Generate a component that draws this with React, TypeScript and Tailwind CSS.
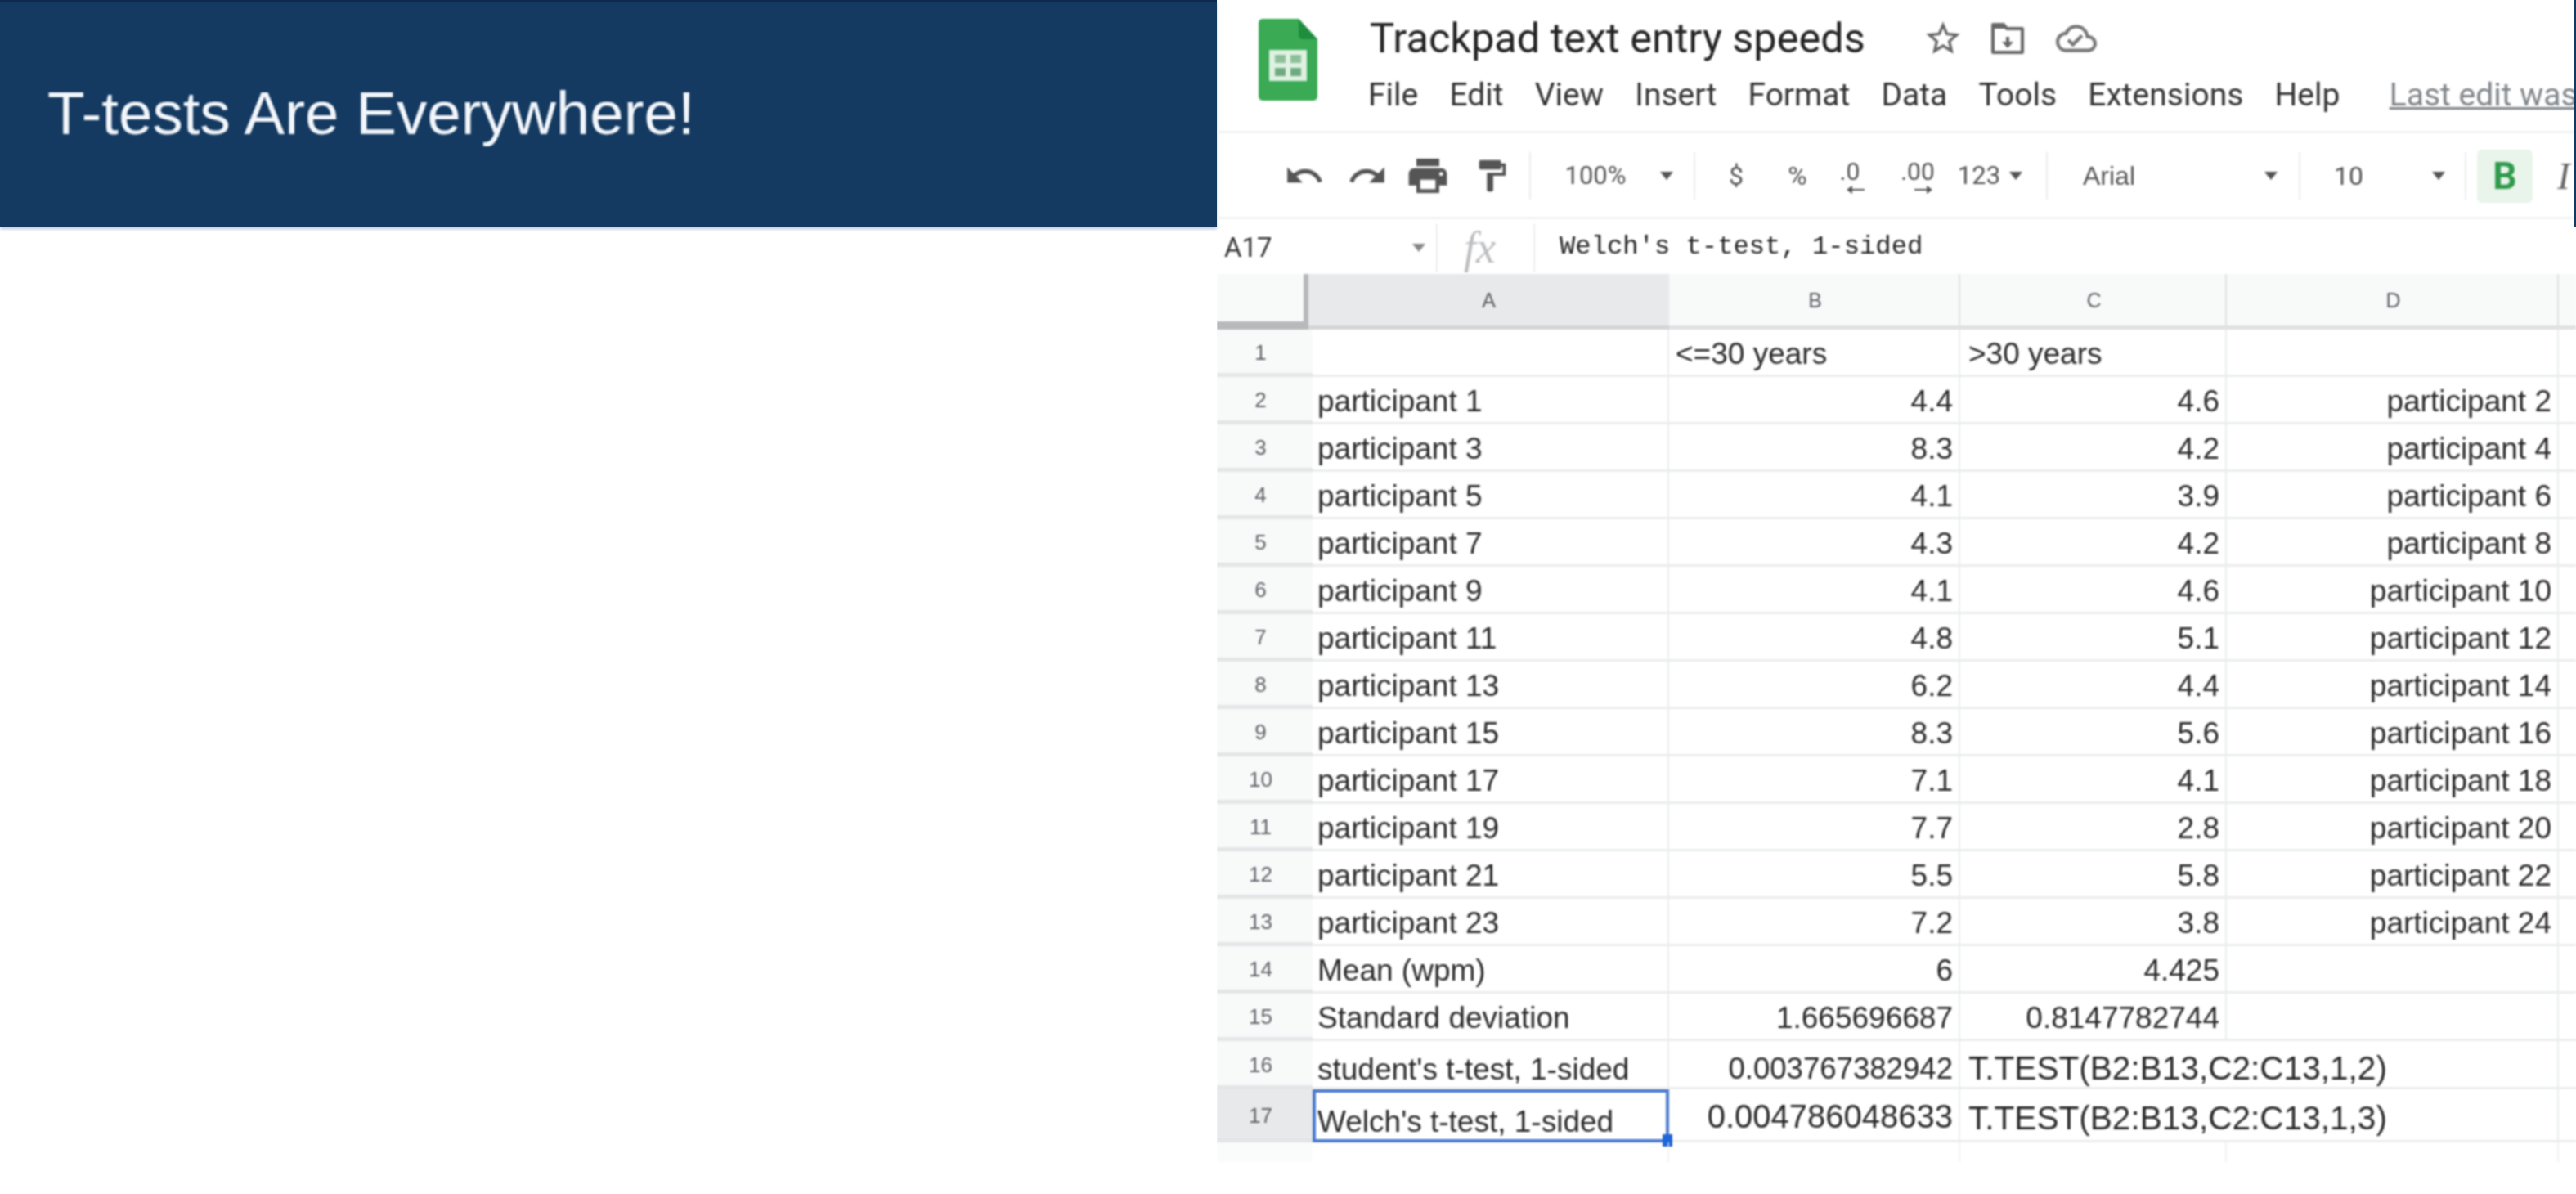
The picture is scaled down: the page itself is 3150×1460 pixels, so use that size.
import { MdFormatPaint, MdOutlineCloudDone, MdPrint, MdRedo, MdStarBorder, MdUndo } from "react-icons/md"

const menu = ["File", "Edit", "View", "Insert", "Format", "Data", "Tools", "Extensions", "Help"]

const speeds = [
  ["4.4", "4.6"],
  ["8.3", "4.2"],
  ["4.1", "3.9"],
  ["4.3", "4.2"],
  ["4.1", "4.6"],
  ["4.8", "5.1"],
  ["6.2", "4.4"],
  ["8.3", "5.6"],
  ["7.1", "4.1"],
  ["7.7", "2.8"],
  ["5.5", "5.8"],
  ["7.2", "3.8"],
]

const gridCols = "grid grid-cols-[112px_5px_436px_356px_326px_406px_21px] grid-rows-[100%]"
const cell = "flex items-center h-full min-h-0 pt-[3px] border-b-[3px] border-r-[2px] border-[#ebecec] whitespace-nowrap leading-none"
const left = cell + " justify-start pl-[6px]"
const right = cell + " justify-end pr-[7px]"

function Caret({ className = "" }: { className?: string }) {
  return (
    <svg viewBox="0 0 16 10" className={"w-[16px] h-[10px] fill-[#555] " + className}>
      <path d="M0 0h16L8 10z" />
    </svg>
  )
}

function Divider({ className = "" }: { className?: string }) {
  return <div className={"w-[2px] h-[58px] bg-[#eceded] shrink-0 " + className} />
}

function SheetsLogo() {
  return (
    <svg viewBox="0 0 72 100" className="w-[72px] h-[100px] shrink-0">
      <path d="M5 0h44l23 25v70a5 5 0 0 1-5 5H5a5 5 0 0 1-5-5V5a5 5 0 0 1 5-5z" fill="#3aaa55" />
      <path d="M49 0l23 25H54a5 5 0 0 1-5-5z" fill="#1e8e3e" />
      <rect x="13" y="38" width="46" height="38" fill="#dff2e2" />
      <rect x="20" y="44" width="13" height="10" fill="#8fbf9a" />
      <rect x="39" y="44" width="13" height="10" fill="#8fbf9a" />
      <rect x="20" y="60" width="13" height="10" fill="#6fa97f" />
      <rect x="39" y="60" width="13" height="10" fill="#6fa97f" />
    </svg>
  )
}

function FolderMove() {
  return (
    <svg viewBox="0 0 42 38" className="w-[42px] h-[38px] ml-[33px] shrink-0">
      <path d="M3 2h13l4 5h19v29H3z" fill="none" stroke="#666" strokeWidth="4" strokeLinejoin="round" />
      <path d="M3 2h13l4 5H3z" fill="#666" />
      <path d="M21 31l-7-8h5v-6h4v6h5z" fill="#666" />
    </svg>
  )
}

function Decimal({ label, flip, className }: { label: string; flip?: boolean; className: string }) {
  return (
    <div className={"flex flex-col items-center justify-center shrink-0 " + className}>
      <span className="text-[30px] leading-[34px] font-['Roboto',sans-serif] text-[#555]">{label}</span>
      <svg viewBox="0 0 22 10" className={"w-[22px] h-[10px] fill-[#555] ml-[14px] " + (flip ? "rotate-180" : "")}>
        <path d="M0 5l7-5v4h15v2H7v4z" />
      </svg>
    </div>
  )
}

function TitleBar() {
  return (
    <div className="h-[163px] flex pl-[51px] pt-[23px] border-b-[3px] border-[#f1f2f2]">
      <SheetsLogo />
      <div className="ml-[64px] flex-1 min-w-0 font-['Roboto',sans-serif]">
        <div className="flex items-center h-[47px]">
          <span className="text-[50.5px] leading-[47px] text-[#222] w-[676px] shrink-0 whitespace-nowrap">Trackpad text entry speeds</span>
          <MdStarBorder size={50} className="text-[#666] shrink-0" />
          <FolderMove />
          <MdOutlineCloudDone size={50} className="text-[#777] ml-[38px] shrink-0" />
        </div>
        <div className="flex items-center gap-[38.25px] ml-[-2px] mt-[24px] h-[44px] text-[39px] leading-[44px] text-[#333] whitespace-nowrap">
          {menu.map((item) => (
            <span key={item}>{item}</span>
          ))}
          <span className="ml-[22px] text-[#80868b] underline underline-offset-2">Last edit was</span>
        </div>
      </div>
    </div>
  )
}

function Toolbar() {
  return (
    <div className="h-[105px] flex items-center pl-[72px] pt-[2px] border-b-[3px] border-[#f1f2f2] overflow-hidden font-['Roboto',sans-serif] text-[#555] whitespace-nowrap">
      <div className="w-[70px] flex justify-center shrink-0"><MdUndo size={50} /></div>
      <div className="w-[84px] flex justify-center shrink-0"><MdRedo size={50} /></div>
      <div className="w-[64px] flex justify-center shrink-0"><MdPrint size={56} /></div>
      <div className="w-[92px] flex justify-center shrink-0"><MdFormatPaint size={46} /></div>
      <Divider />
      <div className="w-[158px] text-center text-[31px] shrink-0">100%</div>
      <Caret className="shrink-0" />
      <Divider className="ml-[25px]" />
      <div className="w-[100px] text-center text-[32px] shrink-0">$</div>
      <div className="w-[50px] text-center text-[32px] shrink-0">%</div>
      <Decimal label=".0" className="w-[78px]" />
      <Decimal label=".00" flip className="w-[88px]" />
      <div className="w-[62px] text-center text-[31px] shrink-0">123</div>
      <Caret className="ml-[6px] shrink-0" />
      <Divider className="ml-[29px]" />
      <div className="ml-[43px] w-[220px] text-[32px] font-['Liberation_Sans',sans-serif] shrink-0">Arial</div>
      <Caret className="ml-[2px] shrink-0" />
      <Divider className="ml-[26px]" />
      <div className="w-[118px] text-center text-[32px] shrink-0">10</div>
      <Caret className="ml-[43px] shrink-0" />
      <Divider className="ml-[24px]" />
      <div className="ml-[13px] w-[68px] h-[65px] flex items-center justify-center rounded-[6px] bg-[#e9f4ea] text-[46px] font-bold text-[#2f9a4c] shrink-0">B</div>
      <div className="ml-[20px] w-[36px] text-center text-[46px] italic font-['Liberation_Serif',serif] text-[#666] shrink-0">I</div>
    </div>
  )
}

function FormulaBar() {
  return (
    <div className="h-[67px] flex items-center pl-[9px] pt-[2px]">
      <span className="w-[230px] text-[33px] text-[#333] font-['Roboto',sans-serif] shrink-0">A17</span>
      <Caret className="w-[10px] h-[7px] mr-[13px] shrink-0 fill-[#888]" />
      <Divider />
      <span className="ml-[32px] w-[85px] text-[54px] leading-none italic text-[#bcbec0] font-['Liberation_Serif',serif] shrink-0">fx</span>
      <Divider />
      <span className="ml-[30px] text-[32.2px] text-[#222] font-['Liberation_Mono',monospace] whitespace-pre">Welch's t-test, 1-sided</span>
    </div>
  )
}

function ColumnHeader() {
  const heads = ["B", "C", "D"]
  return (
    <div className={gridCols + " h-[68px] text-[25px] text-[#5f6368] font-['Liberation_Sans',sans-serif]"}>
      <div className="bg-[#f8f9f9] border-r-[6px] border-b-[10px] border-[#b7b9bb]" />
      <div className="col-span-2 flex items-center justify-center bg-[#e7e9ea] border-b-[5px] border-[#d3d5d6] pt-[2px]">A</div>
      {heads.map((h) => (
        <div key={h} className="flex items-center justify-center bg-[#f8f9f9] border-b-[5px] border-r-[2px] border-[#dfe1e2] pt-[2px] pl-[3px]">{h}</div>
      ))}
      <div className="bg-[#f8f9f9] border-b-[5px] border-[#dfe1e2]" />
    </div>
  )
}

function RowHead({ n, active }: { n: number; active?: boolean }) {
  return (
    <div className={"col-span-2 flex items-center justify-center pr-[10px] pt-[3px] h-full text-[26px] leading-none text-[#5f6368] border-b-[5px] border-[#e4e5e6] " + (active ? "bg-[#e7e9ea]" : "bg-[#f8f9f9]")}>
      {n}
    </div>
  )
}

function Row({ n, a, b, c, d }: { n: number; a: string; b: string; c: string; d: string }) {
  return (
    <div className={gridCols + " h-[58px] text-[37px] text-[#2a2a2a]"}>
      <RowHead n={n} />
      <div className={left}>{a}</div>
      <div className={right}>{b}</div>
      <div className={right}>{c}</div>
      <div className={right}>{d}</div>
      <div className="h-full border-b-[3px] border-[#ebecec]" />
    </div>
  )
}

function Grid() {
  return (
    <div className="font-['Liberation_Sans',sans-serif]">
      <ColumnHeader />
      <div className={gridCols + " h-[58px] text-[37px] text-[#2a2a2a]"}>
        <RowHead n={1} />
        <div className={left} />
        <div className={cell + " pl-[8px]"}>&lt;=30 years</div>
        <div className={cell + " pl-[10px]"}>&gt;30 years</div>
        <div className={cell} />
        <div className="h-full border-b-[3px] border-[#ebecec]" />
      </div>
      {speeds.map(([b, c], i) => (
        <Row key={i} n={i + 2} a={`participant ${i * 2 + 1}`} b={b} c={c} d={`participant ${i * 2 + 2}`} />
      ))}
      <Row n={14} a="Mean (wpm)" b="6" c="4.425" d="" />
      <Row n={15} a="Standard deviation" b="1.665696687" c="0.8147782744" d="" />

      <div className={gridCols + " h-[59px] text-[37px] text-[#2a2a2a]"}>
        <RowHead n={16} />
        <div className={left + " pt-[13px]"}>student's t-test, 1-sided</div>
        <div className={right + " pt-[12px] text-[36.6px]"}>0.003767382942</div>
        <div className="col-span-2 flex items-center h-full pl-[10px] pt-[10px] text-[40.6px] leading-none whitespace-nowrap border-b-[3px] border-r-[2px] border-[#ebecec]">T.TEST(B2:B13,C2:C13,1,2)</div>
        <div className="h-full border-b-[3px] border-[#ebecec]" />
      </div>

      <div className={gridCols + " h-[65px] text-[37px] text-[#2a2a2a]"}>
        <RowHead n={17} active />
        <div className="relative flex items-center h-full pl-[2px] pt-[14px] leading-none whitespace-nowrap border-[4px] border-[#4a7bd0]">
          Welch's t-test, 1-sided
          <div className="absolute right-[-8px] bottom-[-9px] w-[12px] h-[15px] bg-[#1f66d8]" />
        </div>
        <div className={right + " text-[40px]"}>0.004786048633</div>
        <div className="col-span-2 flex items-center h-full pl-[10px] pt-[9px] text-[40.6px] leading-none whitespace-nowrap border-b-[3px] border-r-[2px] border-[#ebecec]">T.TEST(B2:B13,C2:C13,1,3)</div>
        <div className="h-full border-b-[3px] border-[#ebecec]" />
      </div>

      <div className={gridCols + " h-[24px] opacity-70"}>
        <div className="col-span-2 h-full bg-[#f8f9f9]" />
        <div className="h-full border-r-[2px] border-[#ebecec]" />
        <div className="h-full border-r-[2px] border-[#ebecec]" />
        <div className="h-full border-r-[2px] border-[#ebecec]" />
        <div className="h-full border-r-[2px] border-[#ebecec]" />
      </div>
    </div>
  )
}

export default function App() {
  return (
    <div className="w-[3150px] h-[1460px] flex bg-white overflow-hidden">
      <div className="w-[1488px] shrink-0">
        <div className="h-[277px] flex items-center pl-[58px] pb-[2px] bg-[#143a61] border-t-[3px] border-[#10294a] shadow-[0_3px_4px_#b9c6da]">
          <h1 className="text-[74.6px] text-[#f3f6fa] font-['Liberation_Sans',sans-serif] blur-[1px]">T-tests Are Everywhere!</h1>
        </div>
      </div>
      <div className="relative flex-1 min-w-0 overflow-hidden">
        <div className="blur-[1.3px]">
          <TitleBar />
          <Toolbar />
          <FormulaBar />
          <Grid />
        </div>
        <div className="absolute top-0 right-0 w-[3px] h-[277px] bg-[#143a61]" />
      </div>
    </div>
  )
}
